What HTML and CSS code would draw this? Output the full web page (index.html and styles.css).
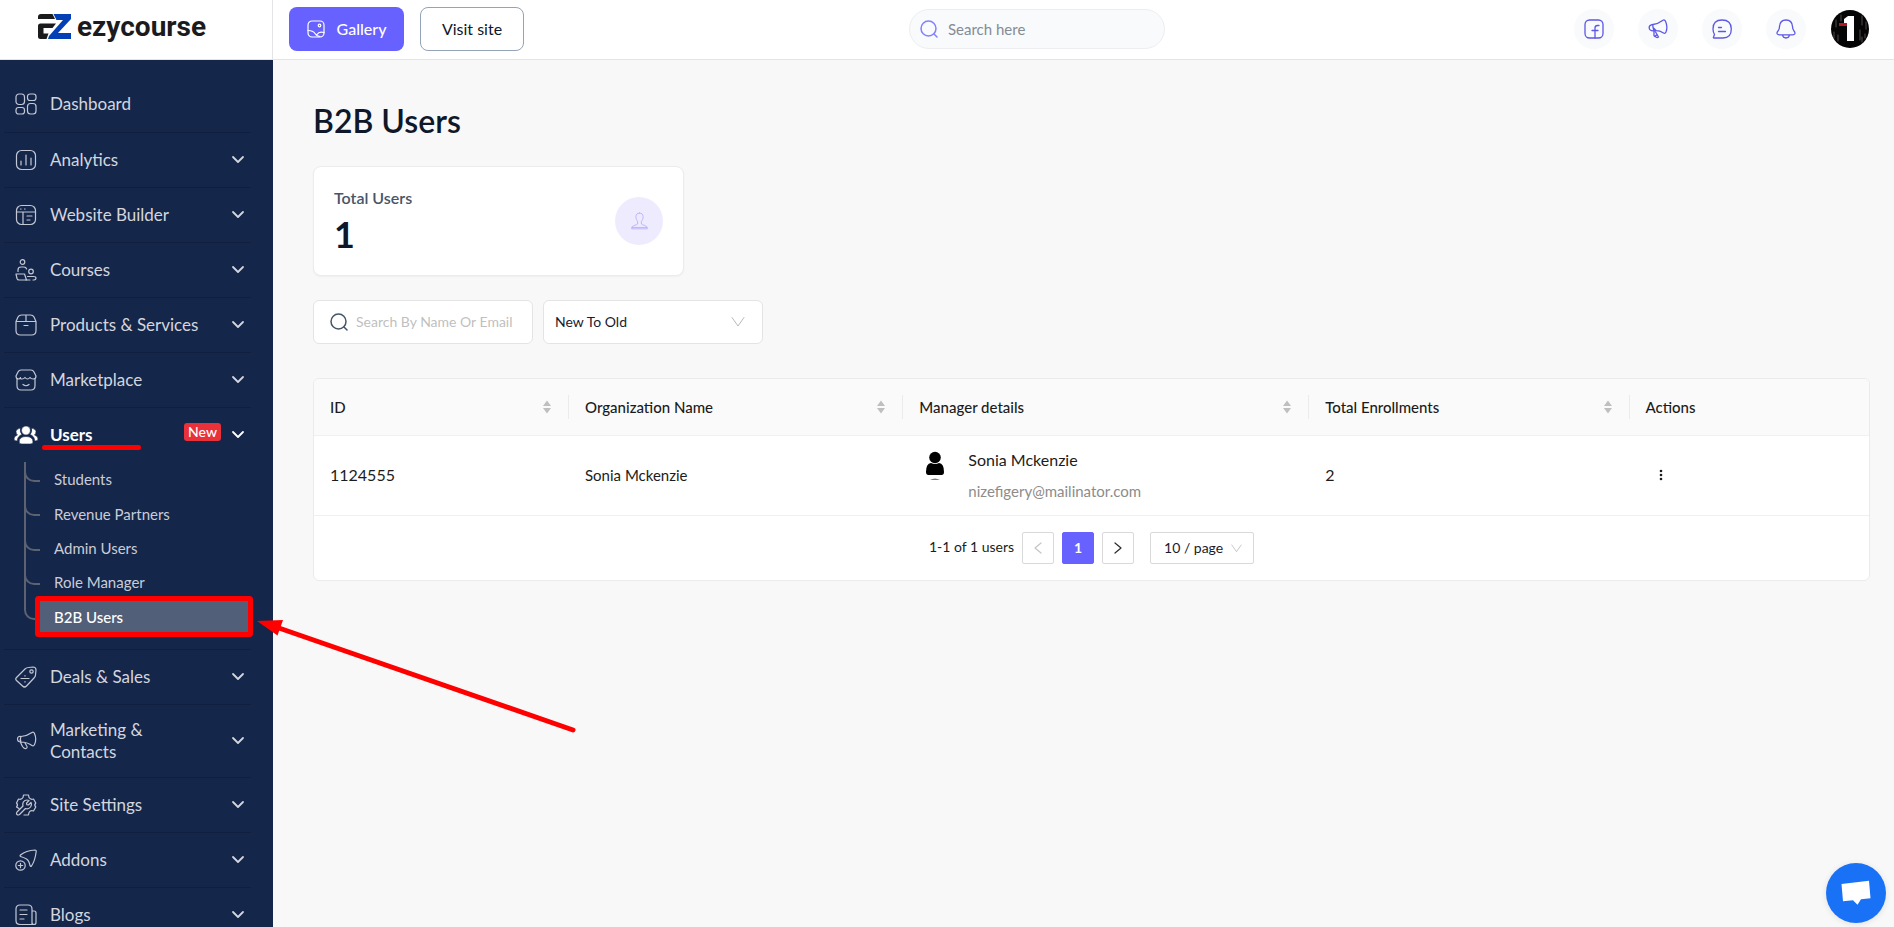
FILE: index.html
```html
<!DOCTYPE html>
<html lang="en">
<head>
<meta charset="utf-8">
<title>B2B Users - ezycourse</title>
<link rel="stylesheet" href="styles.css">
</head>
<body>
<div class="app">
  <aside class="sidebar">
    <a class="brand" href="#">
      <svg class="brand-mark" viewBox="0 0 33 25" aria-hidden="true">
        <path d="M3 0h11.500l2.500 5H0V3q0-3 3-3z" fill="#1b1b1d"/>
        <path d="M2.500 9.500H18L14.500 14H5.500v5.500h5L8.500 25H2.500Q0 25 0 22.500V12Q0 9.500 2.500 9.500z" fill="#1b1b1d"/>
        <path d="M15.500 0H33v5L20 19h13v6H10l1-3L25 6h-6.500z" fill="#0340b5"/>
      </svg>
      <span>ezycourse</span>
    </a>
    <nav class="menu">
      <a class="item" href="#">
        <svg class="icon" viewBox="0 0 22 22"><rect x="1" y="1" width="8.500" height="10.500" rx="3"/><rect x="12.500" y="1" width="8.500" height="6.500" rx="2.500"/><rect x="1" y="14.500" width="8.500" height="6.500" rx="2.500"/><rect x="12.500" y="10.500" width="8.500" height="10.500" rx="3"/></svg>
        <span class="label">Dashboard</span>
      </a>
      <a class="item" href="#">
        <svg class="icon" viewBox="0 0 22 22"><rect x="1.500" y="1.500" width="19" height="19" rx="5"/><path d="M6 12v4M11 6v10M16 9v7"/></svg>
        <span class="label">Analytics</span>
        <svg class="chev" viewBox="0 0 14 14"><path d="M2 4l5 5 5-5"/></svg>
      </a>
      <a class="item" href="#">
        <svg class="icon" viewBox="0 0 22 22"><rect x="1.500" y="1.500" width="19" height="19" rx="5"/><path d="M1.500 8h19M8 8v12.500M12 12h5M12 16h3M5.500 5h.6M9.500 5h.6"/></svg>
        <span class="label">Website Builder</span>
        <svg class="chev" viewBox="0 0 14 14"><path d="M2 4l5 5 5-5"/></svg>
      </a>
      <a class="item" href="#">
        <svg class="icon" viewBox="0 0 22 22"><circle cx="7.500" cy="3" r="2.300"/><path d="M3 12.500V11q0-3 3-3h3q2 0 2.600 2"/><path d="M1 15h8.500l2 6H4q-1.500 0-2-1.500z"/><path d="M11 21h4"/><circle cx="16" cy="12.500" r="2.300"/><path d="M12.500 17.500h6q2.500 0 2.500 1.700T19 21h-1"/></svg>
        <span class="label">Courses</span>
        <svg class="chev" viewBox="0 0 14 14"><path d="M2 4l5 5 5-5"/></svg>
      </a>
      <a class="item" href="#">
        <svg class="icon" viewBox="0 0 22 22"><path d="M1 7.500v9Q1 21 5.500 21h11q4.500 0 4.500-4.500v-9L19 3q-1-2-3.500-2h-9Q4 1 3 3zM1 7.500h20M11 1v6.500M9 11.500h4"/></svg>
        <span class="label">Products &amp; Services</span>
        <svg class="chev" viewBox="0 0 14 14"><path d="M2 4l5 5 5-5"/></svg>
      </a>
      <a class="item" href="#">
        <svg class="icon" viewBox="0 0 22 22"><path d="M2 10v6.500Q2 21 6 21h10q4 0 4-4.500V10"/><path d="M3 3q1-2 3-2h10q2 0 3 2l2 4q0 3-2.600 3T15 8.500Q13.800 10 12.500 10T10 8.500Q8.800 10 7 10T5.500 8.500Q5 10 3.600 10 1 10 1 7z"/><path d="M8 15.500q3 2.500 6 0"/></svg>
        <span class="label">Marketplace</span>
        <svg class="chev" viewBox="0 0 14 14"><path d="M2 4l5 5 5-5"/></svg>
      </a>
      <div class="group">
        <a class="item item-open" href="#">
          <svg class="icon icon-solid" viewBox="0 0 24 20"><circle cx="12" cy="5.500" r="4.500"/><path d="M5 17q0-5.500 7-5.500t7 5.500q0 2-3 2H8q-3 0-3-2z"/><path d="M6.500 3Q5.500 7 8 9.500 3.500 11 3.300 16 0 16 0 14q0-3 3.500-4-1.500-1-1.500-3.500T6.500 3zM17.500 3q1 4-1.500 6.500 4.500 1.500 4.700 6.500 3.300 0 3.300-2 0-3-3.500-4Q22 9 22 6.500T17.500 3z"/></svg>
          <span class="label">Users</span>
          <span class="tag">New</span>
          <svg class="chev" viewBox="0 0 14 14"><path d="M2 4l5 5 5-5"/></svg>
        </a>
        <ul class="submenu">
          <li><a href="#">Students</a></li>
          <li><a href="#">Revenue Partners</a></li>
          <li><a href="#">Admin Users</a></li>
          <li><a href="#">Role Manager</a></li>
          <li><a class="current" href="#">B2B Users</a></li>
        </ul>
      </div>
      <a class="item" href="#">
        <svg class="icon" viewBox="0 0 22 22"><path d="M1.500 11.500L10 3q1.500-1.500 3.500-1.500L18 1q3 0 3 3l-.5 5q0 1.500-1.500 3l-7.500 8q-2 2-4 0l-6-5.500q-1.500-1.500 0-3z"/><circle cx="16.500" cy="5.500" r="1.700"/><path d="M6 12.500h8M10 9.500v.6M10 15.500v.6"/></svg>
        <span class="label">Deals &amp; Sales</span>
        <svg class="chev" viewBox="0 0 14 14"><path d="M2 4l5 5 5-5"/></svg>
      </a>
      <a class="item item-tall" href="#">
        <svg class="icon" viewBox="0 0 22 22"><path d="M6 6.500Q12 6 17 2.500q1.500-1 2.500 1 2.500 6 0 11-1 2-2.500 1-5-3.500-11-3.500-3.500 0-3.500-3T6 6.500zM6 6.500q-1.500 3 0 6M5.500 12.500l2 4q1.500 2.500 3.500 2 2-1 .5-3L10 13"/></svg>
        <span class="label">Marketing &amp; Contacts</span>
        <svg class="chev" viewBox="0 0 14 14"><path d="M2 4l5 5 5-5"/></svg>
      </a>
      <a class="item" href="#">
        <svg class="icon" viewBox="0 0 22 22"><path d="M4 14.500L1.500 13q2-2 0-4L3.500 5Q6.500 6 8 3.500L8.500 1h5l.5 2.500Q15.500 6 18.500 5L20.800 9q-2 2 0 4l-2.300 4q-3-1-4.500 1.500l-.5 2.500H9"/><path d="M2 18l6-6q-1-4 2-5.500 2-1 4 0l-2.500 2.700.3 1.500 1.600.3L16 8.500q1 2-.5 4.500-2 2.500-5 1.500l-6 6q-1.500 1-2.500 0t0-2.500z"/></svg>
        <span class="label">Site Settings</span>
        <svg class="chev" viewBox="0 0 14 14"><path d="M2 4l5 5 5-5"/></svg>
      </a>
      <a class="item" href="#">
        <svg class="icon" viewBox="0 0 22 22"><path d="M5.500 6Q11 1.500 20 1q1.300 0 1.200 1.500Q20 12 16.500 17q-1 1-1.500-.5-1-5-3.500-6.500T5.500 7.500q-.8-.7 0-1.500z"/><circle cx="5.500" cy="16.500" r="4.700"/><path d="M5.500 14.300v4.400M3.300 16.500h4.400"/></svg>
        <span class="label">Addons</span>
        <svg class="chev" viewBox="0 0 14 14"><path d="M2 4l5 5 5-5"/></svg>
      </a>
      <a class="item" href="#">
        <svg class="icon" viewBox="0 0 22 22"><path d="M17 20.500H5q-4 0-4-4V5q0-4 4-4h8q4 0 4 4v15.500zM17 7h2q2 0 2 2v9.500q0 2-2 2t-2-2M5 6h7M5 10.500h7M5 15h4"/></svg>
        <span class="label">Blogs</span>
        <svg class="chev" viewBox="0 0 14 14"><path d="M2 4l5 5 5-5"/></svg>
      </a>
    </nav>
  </aside>

  <div class="page">
    <header class="topbar">
      <div class="actions">
        <button class="btn btn-primary" type="button">
          <svg viewBox="0 0 18 18"><rect x="1" y="1" width="16" height="16" rx="4"/><circle cx="12.500" cy="5.500" r="1.300"/><path d="M1 10.500q5 0 7 3t5 3M10 14.500q2-3.500 7-2"/></svg>
          Gallery
        </button>
        <button class="btn btn-outline" type="button">Visit site</button>
      </div>
      <label class="site-search">
        <svg viewBox="0 0 18 18"><circle cx="8.500" cy="8.500" r="7.500"/><path d="M14 14l3 3"/></svg>
        <input type="search" placeholder="Search here" aria-label="Search here">
      </label>
      <div class="tools">
        <button class="round" type="button" aria-label="Facebook"><svg viewBox="0 0 20 20"><rect x="1" y="1" width="18" height="18" rx="4.500"/><path d="M15 6.500h-1.500q-2.500 0-2.500 2.500v10M8 11.500h6"/></svg></button>
        <button class="round" type="button" aria-label="Announcements"><svg viewBox="0 0 20 20"><path d="M5 5.500Q10 5 15 1.300q1.500-1 2.500 1 2.500 5.500.5 10.700-1 2-2.500 1Q11 11 6 11.800 1.500 12 1.200 9T5 5.500zM5 5.500q-.5 3 1 6.300M6 12v4.500q.5 1.500 1.500.5l1-1M7 12l3.500 6q-2 1.500-3.500-1M5 8.500l3 3"/></svg></button>
        <button class="round" type="button" aria-label="Messages"><svg viewBox="0 0 20 20"><path d="M10 1q9.300 0 9.300 9T11 19H2q-1 0-.5-1l1-2.500Q1 13 1 10q0-9 9-9z"/><path d="M6.500 8.500h3M6.500 12.500h7"/></svg></button>
        <button class="round" type="button" aria-label="Notifications"><svg viewBox="0 0 20 20"><path d="M10 1Q4 1 3.500 7.500q0 3-1.500 4.500t-.7 3q.5.800 2 .8h13.400q1.500 0 2-.8.700-1.500-.7-3t-1.500-4.500Q16 1 10 1zM6.500 16q.5 3 3.500 3t3.500-3"/></svg></button>
        <button class="avatar" type="button" aria-label="Account">
          <svg viewBox="0 0 38 38" aria-hidden="true"><circle cx="19" cy="19" r="19" fill="#050505"/><path d="M5 10v7M3 22v6M7 25v6M10 5v6M31 6v9M34 24v4M31 27v5M35 12v7M29 20v10" stroke="#574d4c" stroke-width="1"/><path d="M8 13h8v3H8z" fill="#b5152b"/><path d="M13 9l4-3h6v25h-7V13h-3z" fill="#fff"/></svg>
        </button>
      </div>
    </header>

    <main class="content">
      <h1>B2B Users</h1>
      <section class="stat">
        <div class="stat-text">
          <span class="stat-label">Total Users</span>
          <strong class="stat-value">1</strong>
        </div>
        <span class="stat-icon"><svg viewBox="0 0 18 18"><path d="M9 .6C6.500.600 5.200 2.200 5.200 4.500q0 1.600.5 2.700.3 1 1.300 2v3Q6.500 13 3.500 13.700.700 14.500.700 17.300h16.600q0-2.800-2.800-3.600-3-.7-3.500-1.500v-3q1-1 1.300-2 .5-1.100.5-2.700C12.800 2.200 11.500.600 9 .6zM1 15.800h16"/></svg></span>
      </section>

      <div class="filters">
        <label class="field">
          <svg viewBox="0 0 18 18"><circle cx="8.500" cy="8.500" r="7.500"/><path d="M14 14l3 3"/></svg>
          <input type="text" placeholder="Search By Name Or Email" aria-label="Search by name or email">
        </label>
        <div class="pick pick-wide">
          <select aria-label="Sort order"><option>New To Old</option><option>Old To New</option></select>
          <svg viewBox="0 0 14 14"><path d="M1 2.500l6 8.500 6-8.500"/></svg>
        </div>
      </div>

      <section class="panel">
        <table class="users">
          <colgroup><col class="c-id"><col class="c-org"><col class="c-manager"><col class="c-total"><col></colgroup>
          <thead>
            <tr>
              <th scope="col"><div class="th"><span>ID</span><svg viewBox="0 0 8 14"><path d="M4 .5L8 6H0zM4 13.500L8 8H0z"/></svg></div></th>
              <th scope="col"><div class="th"><span>Organization Name</span><svg viewBox="0 0 8 14"><path d="M4 .5L8 6H0zM4 13.500L8 8H0z"/></svg></div></th>
              <th scope="col"><div class="th"><span>Manager details</span><svg viewBox="0 0 8 14"><path d="M4 .5L8 6H0zM4 13.500L8 8H0z"/></svg></div></th>
              <th scope="col"><div class="th"><span>Total Enrollments</span><svg viewBox="0 0 8 14"><path d="M4 .5L8 6H0zM4 13.500L8 8H0z"/></svg></div></th>
              <th scope="col"><div class="th"><span>Actions</span></div></th>
            </tr>
          </thead>
          <tbody>
            <tr>
              <td class="number">1124555</td>
              <td>Sonia Mckenzie</td>
              <td>
                <div class="manager">
                  <svg viewBox="0 0 32 32" aria-hidden="true"><circle cx="16" cy="7.500" r="5.800"/><path d="M7 22q0-8.500 5-9 4 2 8 0 5 .5 5 9 0 3-2.500 3h-13Q7 25 7 22z"/><path d="M11 29.500q5-1.300 10 0z"/></svg>
                  <div class="who"><span class="name">Sonia Mckenzie</span><span class="mail">nizefigery@mailinator.com</span></div>
                </div>
              </td>
              <td class="number">2</td>
              <td><button class="more" type="button" aria-label="Row actions"><svg viewBox="0 0 4 12"><circle cx="2" cy="2" r="1.300"/><circle cx="2" cy="6" r="1.300"/><circle cx="2" cy="10" r="1.300"/></svg></button></td>
            </tr>
          </tbody>
        </table>
        <div class="pager">
          <span class="range">1-1 of 1 users</span>
          <button class="step" type="button" disabled aria-label="Previous page"><svg viewBox="0 0 12 12"><path d="M9 1L3 6l6 5"/></svg></button>
          <button class="step step-on" type="button">1</button>
          <button class="step" type="button" aria-label="Next page"><svg viewBox="0 0 12 12"><path d="M3 1l6 5-6 5"/></svg></button>
          <div class="pick pick-small">
            <select aria-label="Rows per page"><option>10 / page</option><option>20 / page</option></select>
            <svg viewBox="0 0 14 14"><path d="M1 2.500l6 8.500 6-8.500"/></svg>
          </div>
        </div>
      </section>
    </main>
  </div>
</div>

<svg class="marks" width="600" height="760" viewBox="0 0 600 760" aria-hidden="true">
  <path d="M44.500 447.500h94" stroke-width="5"/>
  <rect x="37.500" y="598.500" width="213" height="36" rx="1" stroke-width="5"/>
  <path d="M573 730L276 627" stroke-width="5"/>
  <path class="head" d="M257 621l26-1-5.500 15.500z"/>
</svg>
<button class="chat" type="button" aria-label="Open chat"><svg viewBox="0 0 30 26"><path d="M.500 4L28 .800l1.500 17.500-9.500 1-3.500 5.500-4.500-4.500-10 1z"/></svg></button>
</body>
</html>
```

FILE: styles.css
```css
* { box-sizing: border-box; }
body {
  margin: 0;
  background: #f8f8f8;
  color: #1c1c20;
  font: 16px/24px Lato, "Liberation Sans", sans-serif;
}
button, input, select { font: inherit; color: inherit; margin: 0; }
button { cursor: pointer; }
a { color: inherit; text-decoration: none; }
svg { display: block; flex: none; fill: none; stroke: currentColor; stroke-linecap: round; stroke-linejoin: round; }

.app { display: flex; height: 100vh; overflow: hidden; }

/* Sidebar */
.sidebar { flex: none; width: 273px; background: #15264b; overflow: hidden; }
.brand {
  display: flex; align-items: center; gap: 6px;
  height: 60px; padding: 0 0 6px 38px;
  background: #fff; border-right: 1px solid #e4e4e7; border-bottom: 1px solid #e4e4e7;
  color: #1b1b1d; font: 700 28px/32px Roboto, sans-serif;
}
.brand-mark { width: 33px; height: 25px; stroke: none; }
.menu { padding: 16px 22px 0 4px; }
.item {
  display: flex; align-items: center; min-height: 55px;
  padding: 0 6px 0 10px; gap: 10px;
  border-bottom: 1px solid #101f3f;
  color: #d3d6de; font-size: 17px; line-height: 22px;
}
.menu > .item:first-child { min-height: 57px; }
.menu > .item-tall { min-height: 73px; }
.icon { width: 24px; height: 22px; margin-right: 2px; stroke-width: 1.2; color: #c3c8d4; }
.label { flex: 1; max-width: 160px; }
.item-tall .label { max-width: 100px; }
.chev { width: 14px; height: 14px; margin-left: auto; stroke-width: 1.8; }
.group { border-bottom: 1px solid #101f3f; padding-bottom: 15px; }
.item-open { border: 0; min-height: 54px; color: #fff; font-weight: 700; }
.icon-solid { fill: #fff; stroke: #15264b; stroke-width: 0.6; }
.tag {
  padding: 0 4px; margin-bottom: 6px; border-radius: 3px;
  background: #e9313a; font-size: 14px; line-height: 18px; font-weight: 500;
}
.submenu {
  display: grid; grid-auto-rows: 1fr; height: 172px;
  margin: 0; padding: 0 0 0 20px; list-style: none;
  color: #c9cdd7; font-size: 15px; line-height: 20px;
}
.submenu li { position: relative; display: flex; align-items: center; padding-left: 14px; }
.submenu li::before {
  content: ""; position: absolute; left: 0; top: 0; width: 14px; height: 18px;
  border-left: 2px solid #5c6270; border-bottom: 2px solid #5c6270; border-bottom-left-radius: 10px;
}
.submenu li:not(:last-child)::after {
  content: ""; position: absolute; left: 0; top: 0; bottom: 0; border-left: 2px solid #5c6270;
}
.submenu a { flex: 1; padding: 6px 16px; }
.submenu .current { background: #525f79; color: #fff; font-weight: 500; }

/* Top bar */
.page { flex: 1; min-width: 0; }
.topbar {
  display: flex; align-items: center; justify-content: space-between;
  height: 60px; padding: 0 24px 2px 16px;
  background: #fff; border-bottom: 1px solid #e4e4e7;
}
.actions { display: flex; gap: 16px; }
.btn {
  display: flex; align-items: center; justify-content: center; gap: 12px;
  height: 44px; border-radius: 8px; background: #fff;
}
.btn svg { width: 18px; height: 18px; stroke-width: 1.2; }
.btn-primary { width: 115px; border: 0; background: #6661ff; color: #fff; font-weight: 500; }
.btn-outline { width: 104px; border: 1px solid #94a3b8; color: #0f172a; }
.site-search {
  display: flex; align-items: center; gap: 10px;
  width: 256px; height: 40px; padding: 0 10px; border-radius: 20px;
  background: #f8fafc; border: 1px solid #eceef1;
}
.site-search svg { width: 18px; height: 18px; stroke-width: 1.5; color: #8581fb; }
.site-search input { flex: 1; min-width: 0; padding: 0; border: 0; background: none; font-size: 15px; }
.site-search input::placeholder { color: #858b95; opacity: 1; }
.tools { display: flex; align-items: center; gap: 24px; padding-left: 24px; }
.round {
  display: grid; place-items: center; width: 40px; height: 40px; padding: 0;
  border: 0; border-radius: 50%; background: #f8fafc; color: #5d57e8;
}
.round svg { width: 20px; height: 20px; stroke-width: 1.3; }
.avatar { width: 40px; height: 40px; padding: 1px; border: 0; background: none; }
.avatar svg { width: 38px; height: 38px; stroke: none; }

/* Content */
.content { padding: 41px 24px 40px 40px; }
h1 { margin: 0 0 25px; color: #0f172a; font-size: 32px; line-height: 40px; font-weight: 600; }
.stat {
  display: flex; align-items: center; justify-content: space-between;
  width: 371px; height: 110px; padding: 0 20px; margin-bottom: 24px;
  background: #fff; border: 1px solid #ececec; border-radius: 8px;
  box-shadow: 0 1px 2px rgba(0, 0, 0, 0.04);
}
.stat-text { display: flex; flex-direction: column; gap: 4px; padding-bottom: 2px; }
.stat-label { color: #475569; font-weight: 600; }
.stat-value { color: #0f172a; font-size: 36px; line-height: 40px; }
.stat-icon { display: grid; place-items: center; width: 48px; height: 48px; border-radius: 50%; background: #efebff; color: #b8b2fb; }
.stat-icon svg { width: 17px; height: 18px; stroke-width: 1; }

.filters { display: flex; gap: 10px; margin-bottom: 34px; }
.field {
  display: flex; align-items: center; gap: 8px; width: 220px; height: 44px; padding: 0 12px 0 16px;
  background: #fff; border: 1px solid #e4e4e4; border-radius: 6px;
}
.field svg { width: 18px; height: 18px; stroke-width: 1.5; color: #475569; }
.field input { flex: 1; min-width: 0; padding: 0; border: 0; background: none; font-size: 14px; }
.field input::placeholder { color: #bfbfbf; opacity: 1; }
.pick { display: grid; align-items: center; background: #fff; border: 1px solid #e4e4e4; border-radius: 6px; }
.pick select {
  grid-area: 1 / 1; width: 100%; height: 100%; padding: 0 11px;
  appearance: none; border: 0; background: none; color: #1a1a2e; font-size: 14px;
}
.pick svg { grid-area: 1 / 1; justify-self: end; width: 14px; height: 14px; margin-right: 17px; color: #b9b9b9; pointer-events: none; }
.pick-wide { width: 220px; height: 44px; }
.pick-small { width: 104px; height: 32px; margin-left: 8px; border-color: #d9d9d9; border-radius: 2px; }
.pick-small svg { width: 11px; height: 11px; margin-right: 11px; }
.pick-small select { padding: 0 13px; }

.panel { background: #fff; border: 1px solid #ebebeb; border-radius: 6px; overflow: hidden; }
.users { width: 100%; border-collapse: separate; border-spacing: 0; table-layout: fixed; font-size: 15px; }
.c-id { width: 16.4%; }
.c-org { width: 21.5%; }
.c-manager { width: 26.1%; }
.c-total { width: 20.6%; }
.users th { height: 57px; padding: 0; background: #fafafa; border-bottom: 1px solid #f0f0f0; text-align: left; font-weight: 500; }
.th { display: flex; align-items: center; justify-content: space-between; height: 24px; padding: 0 17px 0 16px; }
.users th:not(:last-child) .th { border-right: 1px solid #ebebeb; }
.th svg { width: 8px; height: 14px; fill: #bfbfbf; stroke: none; }
.users td { height: 80px; padding: 0 16px 2px; border-bottom: 1px solid #f0f0f0; }
.users .number { font-size: 16px; }
.manager { display: flex; align-items: flex-start; gap: 17px; height: 60px; }
.manager svg { width: 32px; height: 32px; margin-top: 5px; fill: #000; stroke: none; }
.who { display: flex; flex-direction: column; gap: 8px; padding-top: 3px; }
.name { font-size: 16px; }
.mail { color: #8c8c8c; font-size: 15px; line-height: 22px; }
.more { display: grid; place-items: center; width: 31px; height: 24px; padding: 0; border: 0; background: none; }
.more svg { width: 4px; height: 12px; fill: #1c1c20; stroke: none; }
.pager { display: flex; align-items: center; justify-content: center; gap: 8px; padding: 16px 0; font-size: 14px; line-height: 22px; }
.range { margin-bottom: 3px; }
.step {
  display: grid; place-items: center; width: 32px; height: 32px; padding: 0;
  background: #fff; border: 1px solid #d9d9d9; border-radius: 2px; color: #2b2b2b;
}
.step svg { width: 12px; height: 12px; stroke-width: 1.2; }
.step:disabled { color: #c4c4c4; }
.step-on { background: #6661ff; border-color: #6661ff; color: #fff; font-weight: 700; }

.marks { position: absolute; left: 0; top: 0; stroke: #f00; pointer-events: none; }
.marks .head { fill: #f00; stroke: none; }
.chat {
  position: fixed; right: 8px; bottom: 4px; display: grid; place-items: center;
  width: 60px; height: 60px; padding: 0; border: 0; border-radius: 50%;
  background: #1972f5; box-shadow: 0 1px 6px rgba(0, 0, 0, 0.1);
}
.chat svg { width: 30px; height: 26px; fill: #fff; stroke: none; }
```
